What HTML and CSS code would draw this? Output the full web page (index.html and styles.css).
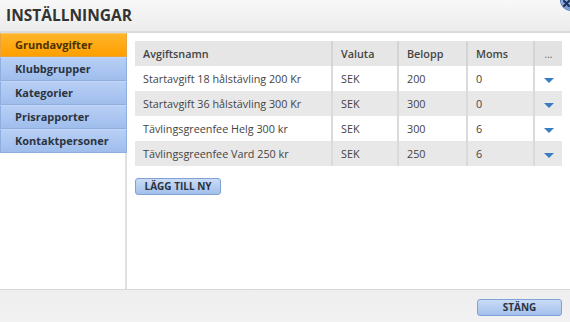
FILE: index.html
```html
<!DOCTYPE html>
<html>
<head>
    <meta charset="utf-8" />
    <title>Inställningar</title>
    <link rel="stylesheet" href="styles.css">
</head>
<body>
<div id="dialog">
    <div id="header">
        <h1>INSTÄLLNINGAR</h1>
        <a href="javascript:;" id="close">
            <svg width="20" height="20" viewBox="0 0 20 20">
                <path d="M3 11 L8 16 M8 11 L3 16" stroke="#1d2f55" stroke-width="2" stroke-linecap="round" />
            </svg>
        </a>
    </div>
    <div id="main">
        <ul id="menu">
            <li class="on">Grundavgifter</li>
            <li>Klubbgrupper</li>
            <li>Kategorier</li>
            <li>Prisrapporter</li>
            <li>Kontaktpersoner</li>
        </ul>
        <div id="content">
            <table id="fees">
                <tr>
                    <th class="c-name">Avgiftsnamn</th>
                    <th class="c-cur">Valuta</th>
                    <th class="c-amount">Belopp</th>
                    <th class="c-vat">Moms</th>
                    <th class="c-more">...</th>
                </tr>
                <tr>
                    <td>Startavgift 18 hålstävling 200 Kr</td>
                    <td>SEK</td>
                    <td>200</td>
                    <td>0</td>
                    <td class="c-more"><span class="drop"></span></td>
                </tr>
                <tr>
                    <td>Startavgift 36 hålstävling 300 Kr</td>
                    <td>SEK</td>
                    <td>300</td>
                    <td>0</td>
                    <td class="c-more"><span class="drop"></span></td>
                </tr>
                <tr>
                    <td>Tävlingsgreenfee Helg 300 kr</td>
                    <td>SEK</td>
                    <td>300</td>
                    <td>6</td>
                    <td class="c-more"><span class="drop"></span></td>
                </tr>
                <tr>
                    <td>Tävlingsgreenfee Vard 250 kr</td>
                    <td>SEK</td>
                    <td>250</td>
                    <td>6</td>
                    <td class="c-more"><span class="drop"></span></td>
                </tr>
            </table>
            <a href="javascript:;" class="btn" id="add">LÄGG TILL NY</a>
        </div>
    </div>
    <div id="footer">
        <a href="javascript:;" class="btn" id="closebtn">STÄNG</a>
    </div>
</div>
</body>
</html>
```

FILE: styles.css
```css
* {
    margin: 0;
    padding: 0;
    text-decoration: none;
}

body {
    font-family: "Open Sans", "Liberation Sans", sans-serif;
    color: #444;
    background: #fff;
    overflow: hidden;
}

#dialog {
    position: relative;
    display: flex;
    flex-direction: column;
    width: 570px;
    height: 322px;
}

#header {
    height: 31px;
    border-bottom: 2px solid #d9d9d9;
    background: linear-gradient(#f8f8f8, #ececec);
}

#header h1 {
    padding: 4px 0 0 6px;
    font-size: 15.5px;
    font-weight: bold;
    line-height: 22px;
    color: #333;
}

#close {
    position: absolute;
    top: -10px;
    right: -11px;
    width: 20px;
    height: 20px;
    border-radius: 50%;
    background: linear-gradient(#a6c3f2, #6f95d6);
    box-shadow: 0 0 0 1px #5577aa;
}

#close svg {
    display: block;
}

#main {
    display: flex;
    flex: 1;
}

#menu {
    width: 125px;
    border-right: 2px solid #e0e0e0;
    list-style: none;
}

#menu li {
    height: 22px;
    margin-right: -2px;
    padding-left: 14px;
    border: 1px solid #8eaee0;
    border-top-color: #c3d6f5;
    background: linear-gradient(#b8cff5, #9fbdec);
    font-size: 11px;
    font-weight: bold;
    line-height: 22px;
    color: #2b3440;
}

#menu li.on {
    border-color: #e8a33a;
    border-top-color: #ffc866;
    background: linear-gradient(#ffb52a, #ff9f00);
    color: #4a3200;
}

#content {
    flex: 1;
    padding: 8px 0 0 8px;
}

#fees {
    width: 427px;
    border-collapse: collapse;
    font-size: 10.8px;
}

#fees th,
#fees td {
    height: 25px;
    padding: 0 0 0 8px;
    border-left: 2px solid #dadada;
    text-align: left;
    white-space: nowrap;
}

#fees th:first-child,
#fees td:first-child {
    border-left: none;
}

#fees th {
    height: 25px;
    font-weight: 600;
    color: #444;
    background: #e6e6e6;
    border-left-color: #d4d4d4;
}

#fees tr:nth-child(odd) td {
    background: #e8e8e8;
}

#fees tr:nth-child(even) td {
    background: #fff;
}

.c-name { width: 188px; }
.c-cur { width: 56px; }
.c-amount { width: 59px; }
.c-vat { width: 57px; }

#fees .c-more {
    width: 27px;
    padding: 0;
    text-align: center;
}

#fees th.c-more {
    background: #e2e2e2;
    font-weight: normal;
    font-size: 10px;
    color: #666;
}

.drop {
    display: inline-block;
    width: 0;
    height: 0;
    border-left: 5px solid transparent;
    border-right: 5px solid transparent;
    border-top: 5px solid #3a7cc4;
    vertical-align: middle;
}

.btn {
    display: inline-block;
    height: 15px;
    border: 1px solid #7fa2d6;
    border-radius: 3px;
    background: linear-gradient(#cadcf7, #a3bfeb);
    font-size: 10px;
    font-weight: bold;
    line-height: 15px;
    text-align: center;
    color: #2a3342;
}

#add {
    margin-top: 12px;
    width: 84px;
}

#footer {
    display: flex;
    justify-content: flex-end;
    align-items: flex-start;
    height: 32px;
    padding-right: 8px;
    border-top: 1px solid #d8d8d8;
    background: linear-gradient(#eeeeee, #f2f2f2);
}

#closebtn {
    margin-top: 9px;
    width: 83px;
}
```
